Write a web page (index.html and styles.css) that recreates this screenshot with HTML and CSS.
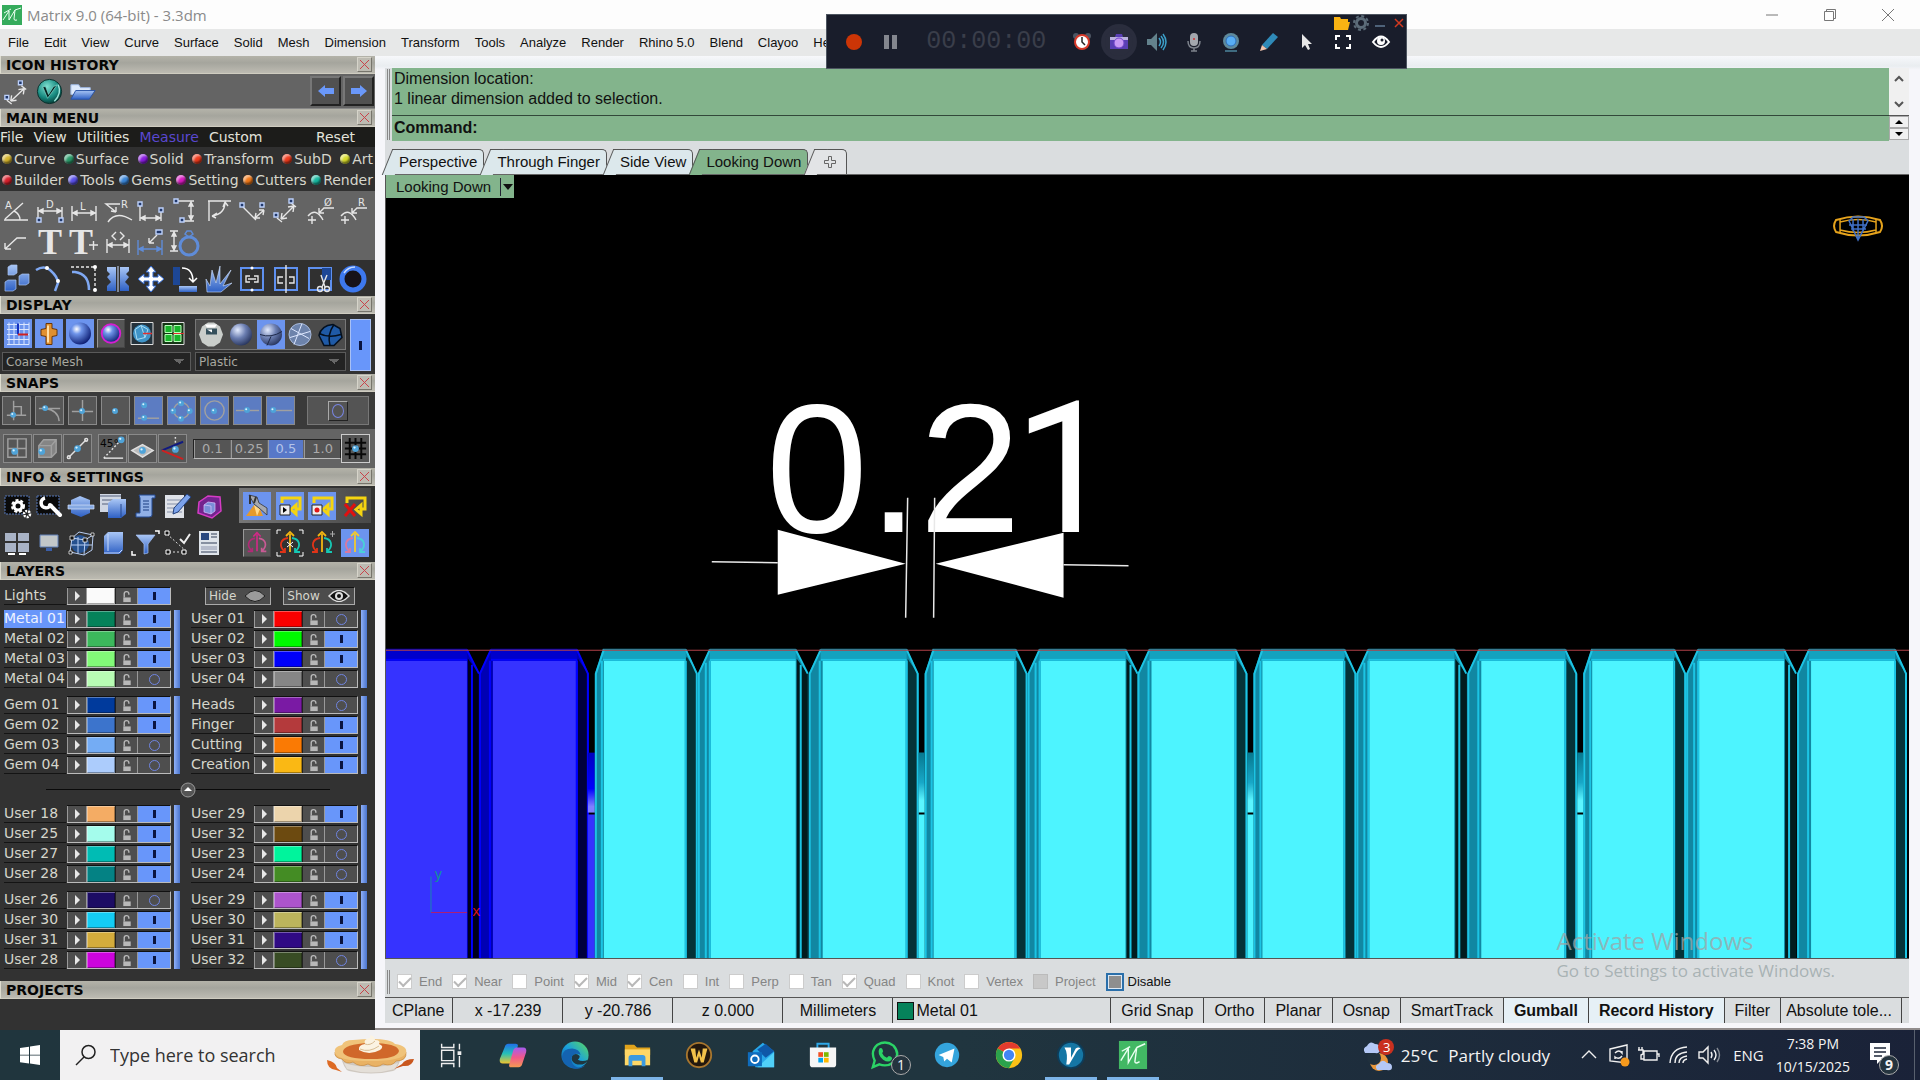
FILE: index.html
```html
<!DOCTYPE html>
<html lang="en">
	<head>
		<title>Matrix 9.0 (64-bit) - 3.3dm</title>
		<meta charset="UTF-8">
		<link rel="stylesheet" href="styles.css">
	</head>
	<body>
		<!-- shared symbols -->
		<svg class="defs" width="0" height="0">
			<defs>
				<radialGradient id="gBlue" cx="35%" cy="30%" r="75%"><stop offset="0" stop-color="#fff"/><stop offset=".3" stop-color="#6f95ea"/><stop offset="1" stop-color="#0a1a70"/></radialGradient>
				<radialGradient id="gSteel" cx="35%" cy="30%" r="75%"><stop offset="0" stop-color="#e4ecff"/><stop offset=".5" stop-color="#6a7db0"/><stop offset="1" stop-color="#27345c"/></radialGradient>
				<radialGradient id="gTeal" cx="40%" cy="30%" r="75%"><stop offset="0" stop-color="#7fe0d0"/><stop offset=".6" stop-color="#178a80"/><stop offset="1" stop-color="#04342f"/></radialGradient>
				<linearGradient id="gBox" x1="0" y1="0" x2="0" y2="1"><stop offset="0" stop-color="#a9c6f5"/><stop offset="1" stop-color="#2e60c4"/></linearGradient>
				<linearGradient id="gEdge" x1="0" y1="1" x2="1" y2="0"><stop offset="0" stop-color="#0c59a4"/><stop offset=".5" stop-color="#1aa0dc"/><stop offset="1" stop-color="#5fdc5a"/></linearGradient>
				<linearGradient id="gCopA" x1="0" y1="0" x2="0" y2="1"><stop offset="0" stop-color="#1f6fe8"/><stop offset=".5" stop-color="#25c0b8"/><stop offset="1" stop-color="#f0c52e"/></linearGradient>
				<linearGradient id="gCopB" x1="0" y1="0" x2="0" y2="1"><stop offset="0" stop-color="#a45cf0"/><stop offset=".5" stop-color="#f0588c"/><stop offset="1" stop-color="#f59a52"/></linearGradient>
				<linearGradient id="gGap" x1="0" y1="0" x2="0" y2="1"><stop offset="0" stop-color="#06788f"/><stop offset=".5" stop-color="#18a8c8"/><stop offset=".8" stop-color="#5cf5ff"/></linearGradient>
				<linearGradient id="gGapBlue" x1="0" y1="0" x2="0" y2="1"><stop offset="0" stop-color="#0000c0"/><stop offset=".6" stop-color="#0000ff"/><stop offset=".9" stop-color="#8080ff"/></linearGradient>
				<symbol id="pt" viewBox="0 0 8 8"><circle cx="4" cy="4" r="3.500" fill="#4fa3d8"/><circle cx="3" cy="3" r="1.200" fill="#d8f2ff"/></symbol>
				<symbol id="lock" viewBox="0 0 12 14"><path d="M3 8V4.500a2.500 2.500 0 0 1 5-.5V5" fill="none" stroke="#b8b8b8" stroke-width="1.500"/><path d="M2 8h8v5H2z" fill="#b8b8b8"/></symbol>
				<symbol id="orbit" viewBox="0 0 28 28"><g fill="none" stroke-width="1.800"><path d="M14 5v18M10 7l4-4 4 4" stroke="var(--up)"/><path d="M12 9C4 10 3 17 8 22M4 23h5v-4" stroke="var(--lt)"/><path d="M16 9c8 1 9 8 4 13M24 23h-5v-4" stroke="var(--rt)"/></g></symbol>
			</defs>
		</svg>

		<header class="titlebar">
			<svg class="app-logo" viewBox="0 0 20 20"><path fill="#35ab5c" d="M0 0h20v20H0z"/><path d="M1 15 7 6l0 9 6-10-1 9q0 2 3 1M2 8 9 4M13 5l6-2" fill="none" stroke="#e9fff0" stroke-width="1"/></svg>
			<h1>Matrix 9.0 (64-bit) - 3.3dm</h1>
			<div class="window-buttons">
				<button title="Minimize"><svg viewBox="0 0 12 12"><path d="M0 6h12"/></svg></button>
				<button title="Restore"><svg viewBox="0 0 12 12"><path d="M.5 2.500h9v9h-9zM2.500 2.500v-2h9v9h-2"/></svg></button>
				<button title="Close"><svg viewBox="0 0 12 12"><path d="M0 0l12 12M12 0 0 12"/></svg></button>
			</div>
		</header>

		<nav class="menubar">
			<a href="#">File</a><a href="#">Edit</a><a href="#">View</a><a href="#">Curve</a><a href="#">Surface</a><a href="#">Solid</a><a href="#">Mesh</a><a href="#">Dimension</a><a href="#">Transform</a><a href="#">Tools</a><a href="#">Analyze</a><a href="#">Render</a><a href="#">Rhino 5.0</a><a href="#">Blend</a><a href="#">Clayoo</a><a href="#">Help</a>
		</nav>

		<div class="workspace">
			<aside class="sidebar">
				<section>
					<div class="panel-head"><h2>ICON HISTORY</h2><button class="panel-close" title="Close"></button></div>
					<div class="history">
						<button class="tool"><svg viewBox="0 0 32 32" class="line"><path d="M6 25l5 4M21 10l5 4M10 26 24 13M10 26l1-6M10 26l6-1M24 13l-6 1M24 13l-1 6"/><path class="node" d="M4 20h4v4H4zM18 5h4v4h-4z"/></svg></button>
						<button class="tool"><svg viewBox="0 0 32 32"><circle cx="16" cy="16" r="12.500" fill="url(#gTeal)" stroke="#0a2f2b"/><path d="M9 11l5 12 10-14-4 2-5 8-3-8z" fill="#04201d" stroke="#7fd8cc" stroke-width=".7"/><path d="M25 9q4 9-4 17" fill="none" stroke="#9be6da" stroke-width="1.500"/></svg></button>
						<button class="tool"><svg viewBox="0 0 32 32"><path d="M4 9h8l2 3h10v7H4z" fill="#dde9fb" stroke="#9db8e4"/><path d="M4 24 9 15h20l-6 9z" fill="url(#gBox)" stroke="#2a55a8"/></svg></button>
						<button class="arrow-btn push" title="Back"><svg viewBox="0 0 20 20"><path d="M2 10l7-6v3h9v6H9v3z"/></svg></button>
						<button class="arrow-btn" title="Forward"><svg viewBox="0 0 20 20"><path d="M18 10l-7-6v3H2v6h9v3z"/></svg></button>
					</div>
				</section>

				<section>
					<div class="panel-head"><h2>MAIN MENU</h2><button class="panel-close" title="Close"></button></div>
					<nav class="main-menu">
						<a href="#">File</a><a href="#">View</a><a href="#">Utilities</a><a href="#" class="current">Measure</a><a href="#">Custom</a><a href="#" class="push">Reset</a>
					</nav>
					<nav class="categories" id="categories"></nav>
					<div class="tool-grid measure-tools">
						<button class="tool"><svg viewBox="0 0 32 32" class="line"><path d="M3 26h24M4 25 22 9M13 17q6 3 6 9"/><text x="4" y="15">A</text></svg></button>
						<button class="tool"><svg viewBox="0 0 32 32" class="line"><path d="M4 13v12M28 13v12M5 17h22M5 17l4-2v4zM27 17l-4-2v4z"/><path class="node" d="M3 24h4v4H3zM25 24h4v4h-4z"/><text x="12" y="14">D</text></svg></button>
						<button class="tool"><svg viewBox="0 0 32 32" class="line"><path d="M4 12v15M28 12v15M5 19h22M5 19l4-2v4zM27 19l-4-2v4z"/><text x="12" y="16">L</text></svg></button>
						<button class="tool"><svg viewBox="0 0 32 32" class="line"><path d="M18 10H4l10 8M14 18l-5-1M6 28q8-12 24-2M14 18v-5"/><text x="19" y="14">R</text></svg></button>
						<button class="tool"><svg viewBox="0 0 32 32" class="line"><path d="M5 12v15M26 18v9M6 24h19M6 24l4-2v4zM25 24l-4-2v4z"/><path class="node" d="M3 8h4v4H3zM24 14h4v4h-4z"/></svg></button>
						<button class="tool"><svg viewBox="0 0 32 32" class="line"><path d="M8 7h17M14 27h11M22 8v18M22 8l-2 4h4zM22 26l-2-4h4z"/><path class="node" d="M5 5h4v4H5zM11 24h4v4h-4z"/></svg></button>
						<button class="tool"><svg viewBox="0 0 32 32" class="line"><path d="M5 7h23M6 7v20M9 22Q22 20 22 8M9 22l5-3M9 22l4 2M22 8l-2 5M22 8l3 4"/></svg></button>
						<button class="tool"><svg viewBox="0 0 32 32" class="line"><path d="M7 13 20 26M19 24l9-8M19 24l1-5M19 24l5 0M28 16l-5 0M28 16l-1 5"/><path class="node" d="M4 9h4v4H4zM24 9h4v4h-4z"/></svg></button>
						<button class="tool"><svg viewBox="0 0 32 32" class="line"><path d="M7 24l5 4M21 9l5 4M11 25 24 12M11 25l1-6M11 25l6-1M24 12l-6 1M24 12l-1 6"/><path class="node" d="M4 19h4v4H4zM19 5h4v4h-4z"/></svg></button>
						<button class="tool"><svg viewBox="0 0 32 32" class="line"><path d="M4 22q8-9 15 4M30 14H20l-5 5M15 19v-5M15 19h5M8 22v8M4 26h8"/><text x="20" y="12">Ø</text></svg></button>
						<button class="tool"><svg viewBox="0 0 32 32" class="line"><path d="M4 22q8-9 15 4M30 14H20l-5 5M15 19v-5M15 19h5M8 22v8M4 26h8"/><text x="21" y="12">R</text></svg></button>
						<button class="tool"><svg viewBox="0 0 32 32" class="line"><path d="M25 11h-9L4 22M4 22v-6M4 22h6"/></svg></button>
						<button class="tool"><svg viewBox="0 0 32 32" class="line"><text class="big-t" x="4" y="27">T</text></svg></button>
						<button class="tool"><svg viewBox="0 0 32 32" class="line"><text class="big-t" x="1" y="27">T</text><path d="M21 18h9M25.500 14v9"/></svg></button>
						<button class="tool"><svg viewBox="0 0 32 32" class="line"><path d="M5 12v14M27 12v14M6 18h20M6 18l4-2v4zM26 18l-4-2v4zM14 5l-4 4 4 4M18 5l4 4-4 4"/></svg></button>
						<button class="tool"><svg viewBox="0 0 32 32" class="line"><path class="blue-line" d="M3 13v15M27 13v15M4 22h22M4 22l4-2v4zM26 22l-4-2v4z"/><path d="M22 8l-8 8M14 16v-5M14 16h5"/><path class="node" d="M21 3h6v4h-6z"/></svg></button>
						<button class="tool"><svg viewBox="0 0 32 32" class="line"><path d="M1 4h8M1 24h8M5 5v18M5 5 3 9h4zM5 23l-2-4h4z"/><circle class="blue-line ring" cx="20" cy="19" r="9"/><path class="blue-line" d="M16 7l2-3h4l2 3-4 3z"/></svg></button>
					</div>
					<div class="tool-grid edit-tools">
						<button class="tool"><svg viewBox="0 0 32 32"><path d="M7 4l3-2h6v8l-3 2H7zM18 13l3-2h7v9l-3 2h-7zM4 19l3-2h8v9l-3 2H4z" fill="url(#gBox)" stroke="#a9c3ef" stroke-width=".7"/></svg></button>
						<button class="tool"><svg viewBox="0 0 32 32" class="line"><path class="thick" d="M2 7q8-5 14 0 8 7 8 13l-3 8"/><circle class="dot" cx="13" cy="5" r="2"/><circle class="dot" cx="24" cy="18" r="2"/></svg></button>
						<button class="tool"><svg viewBox="0 0 32 32" class="line"><path stroke-dasharray="3 2" d="M3 4h24v24"/><path class="thick" d="M4 9h3q14 2 14 18"/><circle class="dot" cx="27" cy="4" r="2"/><circle class="dot" cx="27" cy="27" r="2"/></svg></button>
						<button class="tool"><svg viewBox="0 0 32 32"><path d="M14 4v24H5v-5l4-4-4-5 3-3-3-3V4zM18 4v24h9v-5l-4-4 4-5-3-3 3-3V4z" fill="url(#gBox)"/><path d="M16 3v26" stroke="#cfe0ff"/></svg></button>
						<button class="tool"><svg viewBox="0 0 32 32"><path d="M16 3l5 6h-3v5h5v-3l6 5-6 5v-3h-5v5h3l-5 6-5-6h3v-5H9v3l-6-5 6-5v3h5V9h-3z" fill="#fff" stroke="#2f66cc"/></svg></button>
						<button class="tool"><svg viewBox="0 0 32 32"><path d="M4 4h7v18H4z" fill="#1d4796"/><path d="M10 23h18v6H10z" fill="url(#gBox)"/><path d="M13 5q11 0 11 14M20 15l4 4 4-4" fill="none" stroke="#fff" stroke-width="1.500"/></svg></button>
						<button class="tool"><svg viewBox="0 0 32 32"><path d="M4 29 3 16l4 7L9 7l4 13 4-17 0 18L28 7l-8 16 9-3-11 9z" fill="url(#gBox)" stroke="#cfe0ff" stroke-width=".6"/></svg></button>
						<button class="tool"><svg viewBox="0 0 32 32" class="line"><path class="frame" d="M5 5h22v22H5z"/><path d="M14 13h-4v6h4M18 13h4v6h-4M12 16h8"/><circle class="dot" cx="16" cy="5" r="1.500"/><circle class="dot" cx="16" cy="27" r="1.500"/></svg></button>
						<button class="tool"><svg viewBox="0 0 32 32" class="line"><path class="frame" d="M5 5h22v22H5z"/><path d="M13 14H8v6h5M19 14h5v6h-5M16 2v28"/></svg></button>
						<button class="tool"><svg viewBox="0 0 32 32" class="line"><path class="frame" d="M5 5h22v22H5z"/><path d="M18 5h9v12h-9z" fill="#1d4796" stroke="none"/><path d="M17 12l4 12M23 12l-5 12"/><circle cx="16" cy="26" r="2.500"/><circle cx="23" cy="26" r="2.500"/></svg></button>
						<button class="tool"><svg viewBox="0 0 32 32"><circle cx="16" cy="16" r="11" fill="#171219" stroke="#3d78ee" stroke-width="5"/><path d="M7 10q4-6 11-6" stroke="#c5dbff" stroke-width="1.500" fill="none"/></svg></button>
					</div>
				</section>

				<section>
					<div class="panel-head"><h2>DISPLAY</h2><button class="panel-close" title="Close"></button></div>
					<div class="display">
						<div class="display-left">
							<div class="display-icons">
								<button class="tool on"><svg viewBox="0 0 28 28"><path d="M5 3v22M10 3v22M15 3v22M20 3v22M25 3v22M3 5h22M3 10h22M3 15h22M3 20h22M3 25h22" stroke="#dbe6ff" fill="none"/><path d="M14 4v11" stroke="#1530c0" stroke-width="2"/><path d="M14 15h10" stroke="#d02020" stroke-width="2"/></svg></button>
								<button class="tool on"><svg viewBox="0 0 28 28"><path d="M11 4h6v5l5 1v6l-5 1v8h-6v-8l-5-1v-6l5-1z" fill="#e09030" stroke="#6a3606"/><path d="M13 6v17" stroke="#ffe0a8" stroke-width="2"/></svg></button>
								<button class="tool on"><svg viewBox="0 0 28 28"><circle cx="14" cy="14" r="11" fill="url(#gBlue)"/></svg></button>
								<button class="tool raised"><svg viewBox="0 0 28 28"><circle cx="14" cy="14" r="10" fill="url(#gBlue)" stroke="#d51fd0" stroke-width="2"/></svg></button>
								<button class="tool"><svg viewBox="0 0 28 28"><path d="M3 3h22v22H3z" fill="#24323c" stroke="#ddd"/><circle cx="14" cy="14" r="9" fill="#3f94c8"/><path d="M7 10l6-4 7 4-3 8-8 2zM13 6l4 12" fill="none" stroke="#a9dcf4"/><path d="M15 14h9" stroke="#e03030" stroke-width="1.500"/></svg></button>
								<button class="tool"><svg viewBox="0 0 28 28"><path d="M3 3h22v22H3z" fill="#143614" stroke="#ddd"/><path d="M6 6h7v7H6zM15 6h7v7h-7zM6 15h7v7H6zM15 15h7v7h-7z" fill="#19b52b" stroke="#b9ffb9"/><path d="M14 14h11" stroke="#e03030"/></svg></button>
							</div>
							<select aria-label="Mesh quality"><option>Coarse Mesh</option></select>
						</div>
						<div class="display-right">
							<div class="display-icons boxed">
								<button class="tool"><svg viewBox="0 0 28 28"><path d="M2 14 5 6l6-4h6l6 4 3 8-3 8-6 4h-6l-6-4z" fill="#c9cdca"/><path d="M8 4h12l-2 3h-8z" fill="#fff"/><path d="M9 8h11v6H9z" fill="#35505c"/><path d="M10 9h5v3z" fill="#fff"/></svg></button>
								<button class="tool"><svg viewBox="0 0 28 28"><circle cx="14" cy="14" r="11" fill="url(#gSteel)"/></svg></button>
								<button class="tool on"><svg viewBox="0 0 28 28"><circle cx="14" cy="14" r="11" fill="url(#gSteel)"/><path d="M3 14q11 4 22-3M10 25l4-9" fill="none" stroke="#1c2848"/></svg></button>
								<button class="tool"><svg viewBox="0 0 28 28"><circle cx="14" cy="14" r="11" fill="#6d83ab" stroke="#a9bbdd"/><path d="M5 8l18 10M8 24l8-21M4 17l20-6" stroke="#dde7ff" fill="none"/></svg></button>
								<button class="tool"><svg viewBox="0 0 28 28"><path d="M3 15q2-10 14-11l7 4 2 9-8 8H8z" fill="#1f5aa6" stroke="#04101f" stroke-width="1.500"/><path d="M3 13q10 5 22 1M18 4q-7 10-4 21" fill="none" stroke="#04101f" stroke-width="1.500"/></svg></button>
							</div>
							<select aria-label="Material"><option>Plastic</option></select>
						</div>
						<button class="display-toggle" title="Toggle"></button>
					</div>
				</section>

				<section>
					<div class="panel-head"><h2>SNAPS</h2><button class="panel-close" title="Close"></button></div>
					<div class="snaps-modes">
						<button class="snap"><svg viewBox="0 0 28 28"><path d="M4 19h20M11 4v20M11 10h8v9"/><use href="#pt" x="7" y="15" width="7" height="7"/></svg></button>
						<button class="snap"><svg viewBox="0 0 28 28"><path d="M3 12h22M10 12q13 2 14 13"/><use href="#pt" x="6" y="8" width="7" height="7"/></svg></button>
						<button class="snap"><svg viewBox="0 0 28 28"><path d="M3 15h22M14 3v22"/><use href="#pt" x="10" y="11" width="7" height="7"/></svg></button>
						<button class="snap"><svg viewBox="0 0 28 28"><use href="#pt" x="10" y="11" width="7" height="7"/></svg></button>
						<button class="snap on"><svg viewBox="0 0 28 28"><path d="M3 22h22"/><use href="#pt" x="6" y="5" width="7" height="7"/><use href="#pt" x="6" y="18" width="7" height="7"/></svg></button>
						<button class="snap on"><svg viewBox="0 0 28 28"><circle cx="14" cy="14" r="8"/><use href="#pt" x="10" y="3" width="7" height="7"/><use href="#pt" x="2" y="11" width="7" height="7"/><use href="#pt" x="19" y="11" width="7" height="7"/><use href="#pt" x="10" y="19" width="7" height="7"/></svg></button>
						<button class="snap on"><svg viewBox="0 0 28 28"><circle cx="14" cy="14" r="10"/><use href="#pt" x="10" y="11" width="7" height="7"/></svg></button>
						<button class="snap on"><svg viewBox="0 0 28 28"><path d="M2 14h24"/><use href="#pt" x="10" y="10" width="7" height="7"/></svg></button>
						<button class="snap on"><svg viewBox="0 0 28 28"><path d="M6 14h20"/><use href="#pt" x="3" y="10" width="7" height="7"/></svg></button>
						<button class="snap-all push" title="All snaps"><span></span></button>
					</div>
					<div class="snaps-grid">
						<div class="join">
							<button class="snap"><svg viewBox="0 0 28 28"><path d="M4 4h19v19H4zM14 4v19M4 14h19"/><use href="#pt" x="7" y="13" width="8" height="8"/></svg></button>
							<button class="snap"><svg viewBox="0 0 28 28"><path d="M5 11l5-6h13v13l-5 5H5zM18 23V11M18 11l5-6M5 11h13" fill="#858585"/><use href="#pt" x="4" y="13" width="8" height="8"/></svg></button>
							<button class="snap"><svg viewBox="0 0 28 28"><path class="hi" d="M5 23 23 5"/><circle class="hi" cx="5" cy="23" r="1.500"/><circle class="hi" cx="23" cy="5" r="1.500"/><use href="#pt" x="10" y="10" width="8" height="8"/></svg></button>
						</div>
						<div class="join">
							<button class="snap"><svg viewBox="0 0 28 28"><path class="hi" d="M5 24h20"/><path class="hi" stroke-dasharray="2 2" d="M5 24 22 6"/><text x="1" y="12">45°</text><use href="#pt" x="19" y="1" width="8" height="8"/></svg></button>
							<button class="snap"><svg viewBox="0 0 28 28"><path class="hi" fill="#bbb" d="M3 16l11-6 11 6-11 7z"/><use href="#pt" x="10" y="12" width="8" height="8"/></svg></button>
							<button class="snap"><svg viewBox="0 0 28 28"><path class="hi" stroke-dasharray="2 2" d="M17 2v12"/><path class="navy" d="M3 16 25 7"/><path class="red" d="M3 16l22 9"/><use href="#pt" x="13" y="11" width="8" height="8"/></svg></button>
						</div>
						<div class="steps">
							<button>0.1</button><button>0.25</button><button class="on">0.5</button><button>1.0</button>
						</div>
						<button class="snap grid-btn"><svg viewBox="0 0 28 28"><path class="dark" d="M8 3v22M14 3v22M20 3v22M3 8h22M3 14h22M3 20h22"/><use href="#pt" x="10" y="10" width="8" height="8"/></svg></button>
					</div>
				</section>

				<section>
					<div class="panel-head"><h2>INFO &amp; SETTINGS</h2><button class="panel-close" title="Close"></button></div>
					<div class="info">
						<div class="info-row">
							<button class="tool"><svg viewBox="0 0 28 28"><path d="M2 4h24v18H2z" fill="#0a0a0a" stroke="#5577b8" stroke-dasharray="2 1"/><circle cx="15" cy="14" r="4" fill="none" stroke="#fff" stroke-width="3"/><circle cx="15" cy="14" r="6" fill="none" stroke="#fff" stroke-width="2" stroke-dasharray="3 2"/><circle cx="24" cy="22" r="3" fill="#222" stroke="#fff" stroke-width="2.500" stroke-dasharray="2 1"/></svg></button>
							<button class="tool"><svg viewBox="0 0 28 28"><path d="M2 4h22v18H2z" fill="#0a0a0a" stroke="#5577b8" stroke-dasharray="2 1"/><path d="M15 13l10 10" stroke="#fff" stroke-width="4" stroke-linecap="round"/><path d="M10 6a5 5 0 1 0 6 6" fill="none" stroke="#fff" stroke-width="3.500"/></svg></button>
							<button class="tool"><svg viewBox="0 0 28 28"><path d="M4 8l9-4 10 4v13l-9 4-10-4z" fill="url(#gBox)"/><path d="M1 13h26v4H1z" fill="#86a9e2" stroke="#d7e4fb" stroke-width=".7"/></svg></button>
							<button class="tool"><svg viewBox="0 0 28 28"><path d="M1 2h21v18H1z" fill="#cfd6e2"/><path d="M1 4h21M3 8h17M3 12h17" stroke="#54617c"/><path d="M9 11l5-4h13v15l-5 4H9z" fill="url(#gBox)"/><path d="M22 12v13" stroke="#24468c"/></svg></button>
							<button class="tool"><svg viewBox="0 0 28 28"><path d="M8 3h16v3h-3v17q0 2-3 2H5v-4h4V6z" fill="#91b0e6" stroke="#234a94"/><path d="M12 9h6M12 12h6M12 15h6M12 18h6" stroke="#1b3c80"/></svg></button>
							<button class="tool"><svg viewBox="0 0 28 28"><path d="M2 3h19v23H2z" fill="#dfe2e8"/><path d="M4 8h15M4 12h15M4 16h15M4 20h15" stroke="#8590a8"/><path d="M24 2l4 3-13 15-5 2 1-6z" fill="#7ba2ea" stroke="#22407c"/></svg></button>
							<button class="tool"><svg viewBox="0 0 28 28"><path d="M4 10l9-6 12 1 1 14-9 7-14-5z" fill="#73248e" stroke="#d53cc5" stroke-width="1.500"/><path d="M9 13l4-3 7 1v8l-4 3-7-2zM9 13l7 1v8" fill="#7a8ed8" stroke="#d9c4ff" stroke-width=".7"/></svg></button>
							<div class="info-right light">
								<button class="tool on"><svg viewBox="0 0 28 28"><path d="M3 24 11 13l6 4 3 7z" fill="#e59a2c"/><path d="M11 13l6 4-3 7z" fill="#ffd98a"/><path d="M6 3l8 2 2 6 8 5v7l-8-7-5-4z" fill="#a6a9ae" stroke="#333" stroke-width=".8"/><path d="M7 3v9M13 5l-2 6" stroke="#333" stroke-width="2"/></svg></button>
								<button class="tool on"><svg viewBox="0 0 28 28"><path d="M6 11V6h18v11h-4M20 13v9l-5-4.500z" fill="none" stroke="#f5d410" stroke-width="3"/><path d="M4 13h10v10H4z" fill="#eee" stroke="#222"/><path d="M7 15v6l4-3z"/></svg></button>
								<button class="tool on"><svg viewBox="0 0 28 28"><path d="M6 11V6h18v11h-4M20 13v9l-5-4.500z" fill="none" stroke="#f5d410" stroke-width="3"/><path d="M4 13h10v10H4z" fill="#eee" stroke="#222"/><circle cx="9" cy="18" r="2.500" fill="#e01818"/></svg></button>
								<button class="tool"><svg viewBox="0 0 28 28"><path d="M6 11V6h18v11h-4M20 13v9l-5-4.500z" fill="none" stroke="#f5d410" stroke-width="3"/><path d="M4 12l10 12M14 12 4 24" stroke="#e01010" stroke-width="3"/></svg></button>
							</div>
						</div>
						<div class="info-row">
							<button class="tool"><svg viewBox="0 0 28 28"><path d="M2 4h11v8H2zM15 4h11v8H15zM2 14h11v9H2zM15 14h11v9H15z" fill="#a9b3c6"/><path d="M5 25h7M16 25h7" stroke="#fff" stroke-width="2"/></svg></button>
							<button class="tool"><svg viewBox="0 0 28 28"><path d="M5 6h18v12H5z" fill="#c2c7c9" stroke="#6180b8"/><path d="M11 19h6v3h-6z" fill="#3b5ea8"/></svg></button>
							<button class="tool"><svg viewBox="0 0 28 28"><circle cx="13" cy="15" r="9" fill="#25508e"/><path d="M5 9l7-6 14 3-1 15-8 5L3 23zM5 9l13 2 8-5M18 11l-1 15M4 16h21M11 8v17" fill="none" stroke="#b7cdf2"/><path d="M3 7h4v4H3zM16 9h4v4h-4zM24 4h3v3h-3zM2 22h3v3H2z" fill="#111" stroke="#fff" stroke-width=".7"/></svg></button>
							<button class="tool"><svg viewBox="0 0 28 28"><path d="M5 7l4-4h15v18l-3 4H5z" fill="url(#gBox)"/><path d="M9 5v17M5 24h15l3-3" stroke="#c8dafc" fill="none"/></svg></button>
							<button class="tool"><svg viewBox="0 0 28 28"><path d="M5 6h19l-7 9v9l-4 1V15z" fill="url(#gBox)" stroke="#a6c2f2" stroke-width=".7"/><path d="M24 2h4v3M1 22v4h4" stroke="#fff" fill="none" stroke-width="1.500"/></svg></button>
							<button class="tool"><svg viewBox="0 0 28 28"><path d="M4 5l20 18M6 23h17" stroke="#ddd" stroke-dasharray="2 2"/><path d="M2 2h4v4H2zM3 21h4v4H3zM19 21h4v4h-4z" fill="#111" stroke="#fff"/><path d="M17 10l4 4 6-9" fill="none" stroke="#eee" stroke-width="2"/></svg></button>
							<button class="tool"><svg viewBox="0 0 28 28"><path d="M4 2h20v24H4z" fill="#dfe4ea"/><path d="M6 4h8v7H6z" fill="#27477f"/><path d="M16 5h6M16 8h6M6 14h16M6 23h16" stroke="#6b7488" stroke-width="1.500"/><path d="M6 17h16v4H6z" fill="#b6bccb"/></svg></button>
							<div class="info-right">
								<button class="tool raised"><svg class="pink" viewBox="0 0 28 28"><use href="#orbit"/></svg></button>
								<button class="tool"><svg class="multi" viewBox="0 0 28 28"><use href="#orbit"/><path d="M1 5V1h4M23 1h4v4M1 23v4h4M27 23v4h-4M11 13l6 5M17 13l-6 5" stroke="#fff" fill="none"/></svg></button>
								<button class="tool"><svg class="multi" viewBox="0 0 28 28"><use href="#orbit"/><path d="M22 5h5M24.500 2v6" stroke="#aaa"/></svg></button>
								<button class="tool on"><svg class="soft" viewBox="0 0 28 28"><use href="#orbit"/></svg></button>
							</div>
						</div>
					</div>
				</section>

				<section>
					<div class="panel-head"><h2>LAYERS</h2><button class="panel-close" title="Close"></button></div>
					<div class="layers">
						<div class="layers-top">
							<div id="lights"></div>
							<div class="visibility">
								<button>Hide <svg viewBox="0 0 22 12"><path d="M1 6q10-11 20 0-10 11-20 0z" fill="#9a9a9a" stroke="#222"/></svg></button>
								<button>Show <svg viewBox="0 0 22 12"><path d="M1 6q10-11 20 0-10 11-20 0z" fill="#111" stroke="#ddd" stroke-width="1.500"/><circle cx="11" cy="6" r="4" fill="#ddd"/><circle cx="11" cy="6" r="2" fill="#111"/></svg></button>
							</div>
						</div>
						<div class="layer-cols" id="layersTop"></div>
						<div class="layers-split"><button title="Collapse"><svg viewBox="0 0 16 16"><circle cx="8" cy="8" r="7" fill="#555" stroke="#999"/><path d="M4 9l4-4 4 4z" fill="#fff"/></svg></button></div>
						<div class="layer-cols" id="layersBottom"></div>
					</div>
				</section>

				<section class="projects">
					<div class="panel-head"><h2>PROJECTS</h2><button class="panel-close" title="Close"></button></div>
				</section>
			</aside>

			<main class="main">
				<div class="command">
					<div class="grip"></div>
					<div class="command-text">
						<div class="command-history">
							<p>Dimension location:</p>
							<p>1 linear dimension added to selection.</p>
						</div>
						<div class="command-line"><label for="cmd">Command:</label><input id="cmd" type="text" autocomplete="off"></div>
					</div>
					<div class="command-scroll">
						<div class="scroll-box"><button title="Up"><svg viewBox="0 0 10 8"><path d="M1 6l4-4 4 4"/></svg></button><button title="Down"><svg viewBox="0 0 10 8"><path d="M1 2l4 4 4-4"/></svg></button></div>
						<div class="spin-box"><button title="Previous"><svg viewBox="0 0 8 4"><path d="M0 4l4-4 4 4z"/></svg></button><button title="Next"><svg viewBox="0 0 8 4"><path d="M0 0l4 4 4-4z"/></svg></button></div>
					</div>
				</div>

				<div class="tabs">
					<button class="tab">Perspective</button>
					<button class="tab">Through Finger</button>
					<button class="tab">Side View</button>
					<button class="tab active">Looking Down</button>
					<button class="tab add" title="New viewport"><svg viewBox="0 0 12 12"><path d="M4.500.5h3v4h4v3h-4v4h-3v-4h-4v-3h4z"/></svg></button>
				</div>

				<div class="viewport">
					<svg class="scene" viewBox="0 0 1524 784" preserveAspectRatio="xMinYMin slice">
						<defs>
							<!-- first stone after a gap -->
							<g id="stoneA">
								<path class="side" d="M0 25 8 0H91L103 25V310H0z"/>
								<path class="shade soft" d="M90 12 92 8 103 25V310H92z"/>
								<path class="table" d="M9 12H90V310H9z"/>
								<path class="lip" d="M8 1H91V10H8z"/>
								<path class="edge" d="M1 310V25L9 1M91 1 102 25V310M7 12V310M91 12V310M8 11H91"/>
							</g>
							<!-- middle stone -->
							<g id="stoneB">
								<path class="side" d="M0 25 12 0H98L110 25V310H0z"/>
								<path class="shade" d="M99 10 110 25V310H99z"/>
								<path class="table" d="M13 12H98V310H13z"/>
								<path class="lip" d="M12 1H98V10H12z"/>
								<path class="edge" d="M1 310V25L12 1M98 1 110 25M8 14V310M12 12V310M103 16V310M12 11H98"/>
							</g>
							<!-- last stone before a gap -->
							<g id="stoneC">
								<path class="side" d="M0 25 12 0H98L110 25V310H0z"/>
								<path class="shade soft" d="M99 10 109 25V310H99z"/>
								<path class="table" d="M14 12H97V310H14z"/>
								<path class="lip" d="M12 1H98V10H12z"/>
								<path class="edge" d="M1 310V25L12 1M98 1 109 25V310M11 12V310M98 12V310M12 11H98"/>
							</g>
						</defs>

						<g class="stones blue">
							<use href="#stoneB" x="-17" y="474"/>
							<use href="#stoneC" x="93" y="474"/>
							<path d="M202 578h7v60h-7z" fill="url(#gGapBlue)"/>
							<path class="table" d="M202 640h7v144h-7z"/>
						</g>
						<g class="stones">
							<use href="#stoneA" x="209" y="474"/>
							<use href="#stoneB" x="312" y="474"/>
							<use href="#stoneC" x="423" y="474"/>
							<use href="#stoneA" x="539" y="474"/>
							<use href="#stoneB" x="642" y="474"/>
							<use href="#stoneC" x="752" y="474"/>
							<use href="#stoneA" x="868" y="474"/>
							<use href="#stoneB" x="971" y="474"/>
							<use href="#stoneC" x="1082" y="474"/>
							<use href="#stoneA" x="1198" y="474"/>
							<use href="#stoneB" x="1301" y="474"/>
							<use href="#stoneC" x="1412" y="474"/>
							<path d="M533 578h6v60h-6zM862 578h6v60h-6zM1192 578h6v60h-6z" fill="url(#gGap)"/>
							<path class="table" d="M533 640h6v144h-6zM862 640h6v144h-6zM1192 640h6v144h-6z"/>
						</g>
						<path d="M0 475H1524V476H0z" fill="#b04048"/>

						<!-- linear dimension -->
						<g class="dimension">
							<text y="357"><tspan x="380">0.2</tspan><tspan class="one" x="628">1</tspan></text>
							<path d="M392 355V420L520 389zM678 358V423L550 389z"/>
							<path class="dim-line" d="M326 387 392 388M678 390 743 391M522 323 520 443M549 323 548 443"/>
						</g>

						<path d="M45 702V738" stroke="#1c86b0"/><path d="M45 738H81" stroke="#b02070"/>
						<text class="axis y" x="48" y="704">y</text>
						<text class="axis x" x="86" y="741">x</text>

						<g fill="none" stroke="#e6a31c" stroke-width="2">
							<path d="M1451 45q22-7 44 0 4 6 0 12-22 7-44 0-4-6 0-12z"/>
							<path d="M1455 47q18-5 36 0v8q-18 5-36 0zM1455 44v14M1491 44v14" stroke-width="1.500"/>
							<path d="M1464 46l4-4h11l4 4-10 19zM1464 50h18M1468 44v12M1478 44v12M1473 44v20M1466 54h15" stroke="#3f6fc4" stroke-width="1.500"/>
						</g>
					</svg>
					<div class="view-label"><span>Looking Down</span><button title="Viewport menu"></button></div>
				</div>

				<div class="osnaps" id="osnaps"></div>

				<div class="status">
					<button>CPlane</button>
					<button class="coord">x -17.239</button>
					<button class="coord">y -20.786</button>
					<button class="coord">z 0.000</button>
					<button class="coord">Millimeters</button>
					<button class="layer"><i></i>Metal 01</button>
					<button>Grid Snap</button>
					<button>Ortho</button>
					<button>Planar</button>
					<button>Osnap</button>
					<button>SmartTrack</button>
					<button class="on">Gumball</button>
					<button class="on">Record History</button>
					<button>Filter</button>
					<button class="tol">Absolute tole...</button>
				</div>
				<div class="watermark">
					<p class="wm-title">Activate Windows</p>
					<p>Go to Settings to activate Windows.</p>
				</div>
			</main>
		</div>

		<!-- screen recorder, floats over the window -->
		<div class="recorder">
			<button title="Record"><svg viewBox="0 0 28 28"><circle cx="14" cy="14" r="8" fill="#cc3506"/></svg></button>
			<button title="Pause"><svg viewBox="0 0 28 28"><path d="M7 7h5v14H7zM15 7h5v14h-5z" fill="#83868e"/></svg></button>
			<span class="timer">00:00:00</span>
			<button title="Schedule"><svg viewBox="0 0 28 28"><circle cx="8" cy="8" r="3" fill="#4d5563"/><circle cx="20" cy="8" r="3" fill="#4d5563"/><circle cx="14" cy="14" r="7" fill="#fff" stroke="#d83a2a" stroke-width="2"/><path d="M14 9v5l3 3" stroke="#222" fill="none" stroke-width="1.500"/></svg></button>
			<button class="round" title="Screenshot"><svg viewBox="0 0 28 28"><path d="M5 9h5l1-3h6l1 3h5v12H5z" fill="#5a3fb4"/><path d="M5 9h18v3H5z" fill="#b9b0dd"/><circle cx="14" cy="15" r="5" fill="#c99af5" stroke="#7246cc"/></svg></button>
			<button title="Speaker"><svg viewBox="0 0 28 28"><path d="M5 11h4l6-6v18l-6-6H5z" fill="#63828c"/><path d="M17 10q3 4 0 8M19 8q5 6 0 12M21 6q6 8 0 16" fill="none" stroke="#3c9fc8" stroke-width="1.500"/></svg></button>
			<button title="Microphone"><svg viewBox="0 0 28 28"><rect x="10" y="5" width="8" height="13" rx="4" fill="#a3a7ae"/><path d="M8 13q0 7 6 7t6-7M14 20v3M11 23h6" fill="none" stroke="#7d828c" stroke-width="1.500"/><circle cx="14" cy="11" r="1" fill="#d03030"/></svg></button>
			<button title="Webcam"><svg viewBox="0 0 28 28"><path d="M8 22h12v2H8z" fill="#3f6b80"/><circle cx="14" cy="13" r="8" fill="#5f8a9c"/><circle cx="14" cy="13" r="5" fill="#58aef5" stroke="#2d6dbb"/></svg></button>
			<button title="Draw"><svg viewBox="0 0 28 28"><path d="M18 5l5 4-11 12-5-4z" fill="#2f8ab8"/><path d="M7 17l5 4-7 2z" fill="#f1c4ae"/></svg></button>
			<button title="Cursor"><svg viewBox="0 0 28 28"><path d="M10 6v14l3-3 3 5 2-1-2-5h4z" fill="#e7e7e7"/></svg></button>
			<button title="Region"><svg viewBox="0 0 28 28"><path d="M7 12V8h4M17 8h4v4M21 16v4h-4M11 20H7v-4" fill="none" stroke="#fff" stroke-width="2"/></svg></button>
			<button title="Preview"><svg viewBox="0 0 28 28"><path d="M6 14q8-11 16 0-8 10-16 0z" fill="#1a1e2c" stroke="#fff" stroke-width="2"/><circle cx="14" cy="13" r="4" fill="#fff"/><circle cx="15" cy="12" r="1.500" fill="#1a1e2c"/></svg></button>
			<div class="recorder-corner">
				<button title="Open folder"><svg viewBox="0 0 16 16"><path d="M0 2h6l1 2h7v3h2l-2 8H0z" fill="#f9b313"/></svg></button>
				<button title="Settings"><svg viewBox="0 0 16 16"><circle cx="8" cy="8" r="4.500" fill="none" stroke="#5b6b78" stroke-width="3"/><circle cx="8" cy="8" r="7" fill="none" stroke="#5b6b78" stroke-width="2" stroke-dasharray="3 2.500"/></svg></button>
				<button title="Minimize"><svg viewBox="0 0 16 16"><path d="M3 11h10" stroke="#607a94" stroke-width="1.500"/></svg></button>
				<button title="Close"><svg viewBox="0 0 16 16"><path d="M4 4l8 8M12 4l-8 8" stroke="#d33a20" stroke-width="1.500"/></svg></button>
			</div>
		</div>

		<footer class="taskbar">
			<button class="start" title="Start"><svg viewBox="0 0 20 20"><path d="M0 3l9-1.300v8H0zM10 1.500 20 0v9.700H10zM0 10.500h9v8L0 17.200zM10 10.500h10V20l-10-1.500z" fill="#fff"/></svg></button>
			<div class="search">
				<svg class="glass" viewBox="0 0 22 22"><circle cx="13.500" cy="8" r="6.500"/><path d="M9 13l-8 8"/></svg>
				<input type="text" placeholder="Type here to search" aria-label="Type here to search">
				<svg class="pie" viewBox="0 0 90 40"><path d="M14 19q4 16 9 17 22 5 44 0 5-1 9-17z" fill="#cfc8c0"/><path d="M18 28q26 8 54 0l-3 6q-24 7-48 0z" fill="#e4dfd8"/><path d="M9 17q-1 6 7 7 4 6 11 3 7 6 15 2 8 5 15 0 9 3 13-3 11 0 10-9z" fill="#e9b264" stroke="#c98a3c" stroke-width=".7"/><path d="M9 18q-2-6 7-8 2-5 11-5 36-3 42 4 13 2 11 9-4 8-36 8T9 18z" fill="#f0c37a"/><path d="M17 17q0-8 27-9 28 0 29 8-2 8-28 8-26 0-28-7z" fill="#d0682a"/><path d="M33 15q-1-5 6-6-2-5 5-6 1-2 0-3 5 1 5 5 6 0 4 4 6 2 1 6-11 6-21 0z" fill="#fbf3e2"/><path d="M34 14q9 4 19-3M39 9q5 2 10-3" stroke="#d8bd94" fill="none"/><path d="M1 25q9 2 10 8l5 4-6-2Q1 34 1 25z" fill="#dd6a24"/><path d="M88 24q-9 0-12 5l-8 5 9-3q9 1 11-7z" fill="#c9571f"/></svg>
			</div>
			<div class="apps">
				<button title="Task View"><svg viewBox="0 0 32 32"><g fill="none" stroke="#eee" stroke-width="1.500"><path d="M6 11h13v11H6zM6 4v4h13V4M6 29v-4h13v4M25 4v6M25 17v12"/></g><path d="M23 12h4v4h-4z" fill="#eee"/></svg></button>
				<button title="Copilot"><svg viewBox="0 0 32 32"><path d="M11 4h8q3 0 2 3l-5 15q-1 3-4 3H5q-4 0-3-5L7 8q1-4 4-4z" fill="url(#gCopA)"/><path d="M20 8h7q4 0 3 5l-4 12q-1 4-4 4h-8q-3 0-2-3l4-14q1-4 4-4z" fill="url(#gCopB)"/></svg></button>
				<button title="Edge"><svg viewBox="0 0 32 32"><circle cx="16" cy="16" r="14.500" fill="url(#gEdge)"/><path d="M2 18q1-9 11-9 8 1 9 7-5-3-9 1-3 6 3 11 5 3 11-1-5 5-13 3Q3 27 2 18z" fill="#1463b0"/><path d="M13 17q4-4 8 0 0 3-2 4 5 3 11 0-2 4-6 5-8 1-11-4-1-2 0-5z" fill="#1f363f"/></svg></button>
				<button class="open" title="File Explorer"><svg viewBox="0 0 32 32"><path d="M3 5h10l3 3h14v8H3z" fill="#e0a31c"/><path d="M3 10h27v17H3z" fill="#ffd766"/><path d="M7 28V19q0-3 3-3h12q3 0 3 3v9h-4v-6H11v6z" fill="#3c9ae0"/></svg></button>
				<button title="World of Warcraft"><svg viewBox="0 0 32 32"><circle cx="16" cy="16" r="13" fill="#23180e" stroke="#a8762e" stroke-width="2"/><path d="M7 9h5l1 10 3-9 3 9 1-10h5l-4 15h-3l-2-7-2 7h-3z" fill="#f2c14a"/></svg></button>
				<button title="Outlook"><svg viewBox="0 0 32 32"><path d="M7 12 18 3l12 9v17H10z" fill="#28a8ea"/><path d="M12 10l9-6 9 8-9 7z" fill="#0f58a8"/><path d="M30 13v16H12z" fill="#50d0f8"/><path d="M2 13h15v15H2z" fill="#0f6cbd"/><circle cx="9.500" cy="20.500" r="4" fill="none" stroke="#fff" stroke-width="2"/></svg></button>
				<button title="Store"><svg viewBox="0 0 32 32"><path d="M10 9V4h12v5" fill="none" stroke="#2fa8e8" stroke-width="2"/><path d="M2 8h28v18q0 3-3 3H5q-3 0-3-3z" fill="#f6f6f6"/><path d="M11 13h5v5h-5z" fill="#f25022"/><path d="M17 13h5v5h-5z" fill="#7fba00"/><path d="M11 19h5v5h-5z" fill="#00a4ef"/><path d="M17 19h5v5h-5z" fill="#ffb900"/></svg></button>
				<button title="WhatsApp"><svg viewBox="0 0 32 32"><path d="M3 29l2-7Q0 12 8 5q9-5 17 1 8 9 0 18-7 5-15 2z" fill="none" stroke="#2bd366" stroke-width="2.500"/><path d="M10 9q3-2 4 3l-1 2q1 3 5 5l2-2q5 1 3 4-3 4-9 0-7-6-4-12z" fill="#2bd366"/></svg><span class="badge">1</span></button>
				<button title="Telegram"><svg viewBox="0 0 32 32"><circle cx="16" cy="16" r="13" fill="#34a4dc"/><path d="M7 16l17-7-3 15-5-4-3 3-1-5z" fill="#fff"/></svg></button>
				<button title="Chrome"><svg viewBox="0 0 32 32"><circle cx="16" cy="16" r="14" fill="#fbc116"/><path d="M16 16 3.900 9A14 14 0 0 1 28.100 9z" fill="#e33b2e"/><path d="M16 16 3.900 9A14 14 0 0 0 16 30l6-11z" fill="#2ba24c"/><path d="M16 9h12L22 20z" fill="#fbc116"/><circle cx="16" cy="16" r="7" fill="#fff"/><circle cx="16" cy="16" r="5.500" fill="#4285f4"/></svg></button>
				<button class="open" title="Matrix launcher"><svg viewBox="0 0 32 32"><circle cx="16" cy="16" r="14" fill="#1576a4" stroke="#0e3c58" stroke-width="2"/><path d="M9 8h7l0 11 5-10q3-2 5 0-4 2-6 7l-6 10h-3q2-12-2-18z" fill="#fff"/></svg></button>
				<button class="open" title="Matrix"><svg viewBox="0 0 32 32"><path fill="#42b864" d="M1 1h30v30H1z"/><path d="M3 22 11 9l0 15L20 8l-2 15q0 3 5 0M4 12l9-5M20 8l9-4" fill="none" stroke="#e9fff0" stroke-width="1.500"/></svg></button>
			</div>
			<div class="weather">
				<svg viewBox="0 0 34 34"><circle cx="18" cy="24" r="9" fill="#e9973c"/><circle cx="13" cy="20" r="7" fill="#20303d"/><path d="M4 15q-3-5 2-7 3-6 8-2 5 0 5 5t-5 4z" fill="#b4c8f6"/><path d="M16 32q-3-5 2-6 3-6 8-1 5 0 5 4t-5 3z" fill="#b4c8f6"/><circle cx="25" cy="9" r="8" fill="#c9301f"/><text x="22" y="14">3</text></svg>
				<span>25°C</span><span>Partly cloudy</span>
			</div>
			<div class="tray">
				<button title="Show hidden icons"><svg viewBox="0 0 24 24"><path d="M5 15l7-7 7 7"/></svg></button>
				<button title="Update"><svg viewBox="0 0 24 24"><path d="M3 6l17-4v18L3 18zM8 10q4-4 7 0v-2M15 13q-3 4-7 1v2"/><circle cx="18" cy="19" r="4.500" fill="#f79a1d" stroke="none"/></svg></button>
				<button title="Battery"><svg viewBox="0 0 24 24"><path d="M7 8h13v9H7zM20 11h2v3M2 4v3M5 4v3M1 7h5v4l-2 1v4h3"/></svg></button>
				<button title="Network"><svg viewBox="0 0 24 24"><path d="M3 20Q4 5 20 4M8 20Q8 10 20 9M12 20q0-6 8-7M16 20q0-3 4-4"/></svg></button>
				<button title="Volume"><svg viewBox="0 0 24 24"><path d="M2 9h4l5-5v16l-5-5H2zM14 9q2 3 0 6M17 7q4 5 0 10"/><path d="M20 5q5 7 0 14" opacity=".5"/></svg></button>
			</div>
			<span class="lang">ENG</span>
			<div class="clock"><span>7:38 PM</span><span>10/15/2025</span></div>
			<button class="notify" title="Notifications"><svg viewBox="0 0 24 24"><path d="M2 2h20v17h-9l-4 4v-4H2z" fill="#fff"/><path d="M6 7h12M6 11h12M6 15h8" stroke="#1c2638" stroke-width="1.500"/></svg><span class="badge">9</span></button>
		</footer>
		<script src="script.js"></script>
	</body>
</html>
```
FILE: styles.css
```css
* {
	box-sizing: border-box;
}

html, body {
	height: 100%;
}

body {
	margin: 0;
	display: flex;
	flex-direction: column;
	overflow: hidden;
	position: relative;
	font-family: "Liberation Sans", Arial, sans-serif;
	font-size: 16px;
	color: #111;
	background: #f6f6fa;
}

button, input, select {
	font: inherit;
	color: inherit;
	margin: 0;
	padding: 0;
	border: 0;
	border-radius: 0;
	background: none;
}

a {
	color: inherit;
	text-decoration: none;
}

h1, h2, p {
	margin: 0;
	font-weight: normal;
}

svg {
	display: block;
}

.defs {
	position: absolute;
}

.push {
	margin-left: auto;
}

/* title + menu */
.titlebar {
	display: flex;
	align-items: center;
	flex: none;
	height: 29px;
	padding-left: 2px;
	background: #fdfdfd;
}

.app-logo {
	width: 20px;
	height: 20px;
}

.titlebar h1 {
	margin-left: 5px;
	font-family: "Open Sans", sans-serif;
	font-size: 15px;
	color: #8a8a8a;
}

.window-buttons {
	display: flex;
	margin-left: auto;
	padding-right: 3px;
}

.window-buttons button {
	display: grid;
	place-items: center;
	width: 58px;
	height: 28px;
}

.window-buttons svg {
	width: 12px;
	height: 12px;
	fill: none;
	stroke: #777;
}

.menubar {
	display: flex;
	align-items: center;
	flex: none;
	gap: 15px;
	height: 27px;
	padding-left: 8px;
	background: #e7e8e8;
	font-size: 13px;
}

.workspace {
	display: flex;
	flex: 1;
	min-height: 0;
}

/* left side */
.sidebar {
	display: flex;
	flex-direction: column;
	flex: none;
	width: 375px;
	background: #323232;
	color: #d6d6cc;
	font-family: "DejaVu Sans", Verdana, sans-serif;
	font-size: 14px;
	overflow: hidden;
}

.panel-head {
	display: flex;
	align-items: center;
	justify-content: space-between;
	height: 18px;
	padding: 0 3px 0 5px;
	background: linear-gradient(#b4b3a9, #a5a59d 40%, #bdbbb2);
	border-left: 1px solid #dedccf;
	border-bottom: 1px solid #cfccc0;
	color: #050505;
}

.panel-head h2 {
	font-size: 14px;
	line-height: 16px;
	font-weight: bold;
}

.panel-close {
	width: 15px;
	height: 15px;
	border: 1px solid #77756c;
	border-top-color: #d6d4ca;
	border-left-color: #d6d4ca;
	background:
		linear-gradient(45deg, transparent 45%, #c8434a 45%, #c8434a 55%, transparent 55%) center / 9px 9px no-repeat,
		linear-gradient(-45deg, transparent 45%, #c8434a 45%, #c8434a 55%, transparent 55%) center / 9px 9px no-repeat,
		#bdbbb2;
}

.tool {
	display: grid;
	place-items: center;
}

.tool svg {
	width: 100%;
	height: 100%;
	overflow: visible;
}

.line {
	fill: none;
	stroke: #e6e6e6;
	stroke-width: 1.4;
}

.line text {
	fill: #e6e6e6;
	stroke: none;
	font-size: 10px;
}

.line .big-t {
	font-family: "Liberation Serif", serif;
	font-size: 36px;
	font-weight: bold;
}

.line .node {
	fill: #20386c;
	stroke: #bcd0fa;
}

.line .blue-line {
	stroke: #5f8cd8;
}

.line .ring {
	stroke-width: 3;
}

.line .thick {
	stroke: #7fa8f2;
	stroke-width: 2.5;
}

.line .frame {
	stroke: #5e90f0;
	stroke-width: 2;
}

.line .dot {
	fill: #fff;
	stroke: none;
}

.on {
	background: #6c94ee;
}

.history {
	display: flex;
	align-items: center;
	gap: 2px;
	height: 35px;
	padding: 0 1px;
	background: #646464;
	border-bottom: 1px solid #888;
}

.history .tool {
	width: 31px;
	height: 30px;
}

.arrow-btn {
	display: grid;
	place-items: center;
	width: 31px;
	height: 30px;
	background: #515151;
	border: 2px outset #777;
}

.arrow-btn svg {
	width: 20px;
	height: 20px;
	fill: #6a98fa;
}

.main-menu {
	display: flex;
	align-items: center;
	gap: 10px;
	height: 20px;
	padding-right: 20px;
	background: #1c1c1a;
	color: #e2e2da;
}

.main-menu .current {
	color: #5a48d0;
}

.categories {
	display: flex;
	flex-direction: column;
	height: 44px;
	padding-top: 1px;
	background: #303030;
}

.category-row {
	display: flex;
	justify-content: space-between;
	align-items: center;
	height: 21px;
	padding: 0 2px;
}

.category {
	display: flex;
	align-items: center;
	gap: 2px;
}

.category i {
	width: 10px;
	height: 10px;
	border-radius: 50%;
	box-shadow: inset -1px -2px 2px #0008, inset 2px 2px 2px #fff8;
}

.tool-grid {
	display: grid;
	grid-template-columns: repeat(11, 1fr);
	padding: 2px 5px 1px 0;
}

.tool-grid .tool {
	height: 33px;
}

.measure-tools {
	background: #646464;
}

.edit-tools {
	background: #303030;
}

.tool-grid .tool svg {
	width: 32px;
	height: 32px;
}

/* display panel */
.display {
	display: flex;
	gap: 4px;
	padding: 5px 4px 3px 2px;
	height: 60px;
}

.display-left {
	flex: 1;
	display: flex;
	flex-direction: column;
	justify-content: space-between;
}

.display-right {
	width: 151px;
	display: flex;
	flex-direction: column;
	justify-content: space-between;
}

.display-icons {
	display: flex;
	justify-content: space-between;
	padding: 0 4px 0 2px;
}

.display-icons .tool {
	width: 28px;
	height: 29px;
}

.boxed {
	background: #4b4b4b;
	border: 1px solid #777;
	padding: 0 1px;
}

.display select {
	appearance: none;
	height: 19px;
	padding-left: 3px;
	border: 1px solid #5a5a5a;
	background:
		linear-gradient(45deg, transparent 50%, #666 50%) right 11px center / 5px 5px no-repeat,
		linear-gradient(-45deg, transparent 50%, #666 50%) right 6px center / 5px 5px no-repeat,
		#232323;
	color: #a8a8a0;
	font-size: 12px;
	width: 100%;
}

.display-toggle {
	display: grid;
	place-items: center;
	width: 21px;
	border: 1px solid #a8c0f4;
	background: #6896fa;
}

.display-toggle::before {
	content: "";
	width: 3px;
	height: 9px;
	background: #0a1440;
}

.raised {
	border: 1px outset #999;
	background: #555;
}

/* snaps */
.snap {
	width: 29px;
	height: 29px;
	border: 1px solid #8a8a8a;
	background: #565656;
}

.snap.on {
	background: #5c7cc2;
}

.snap svg {
	width: 27px;
	height: 27px;
	fill: none;
	stroke: #a0a0a0;
	stroke-width: 1.5;
}

.snap svg text {
	fill: #050505;
	stroke: none;
	font-size: 11px;
}

.snap svg .hi {
	stroke: #e0e0e0;
}

.snap svg .navy {
	stroke: #101a80;
	stroke-width: 2;
}

.snap svg .red {
	stroke: #d02020;
	stroke-width: 2;
}

.snap svg .dark {
	stroke: #080808;
	stroke-width: 2;
}

.snap use {
	stroke: none;
}

.snaps-modes {
	display: flex;
	gap: 4px;
	align-items: center;
	height: 37px;
	padding: 0 6px 0 2px;
	background: #3a3a3a;
}

.snap-all {
	display: grid;
	place-items: center;
	width: 62px;
	height: 29px;
	border: 1px solid #777;
	background: #545454;
}

.snap-all span {
	display: grid;
	place-items: center;
	width: 20px;
	height: 20px;
	border: 1px solid #aaa;
	border-right-color: #222;
	border-bottom-color: #222;
}

.snap-all span::before {
	content: "";
	width: 10px;
	height: 12px;
	border: 1px solid #7784e0;
	border-radius: 50%;
}

.snaps-grid {
	display: flex;
	align-items: center;
	height: 39px;
	padding: 0 5px 0 3px;
	background: #646464;
	gap: 6px;
}

.join, .steps {
	display: flex;
	gap: 1px;
}

.steps {
	flex: 1;
	border: 1px solid #222;
	border-bottom-color: #bbb;
}

.steps button {
	flex: 1;
	height: 18px;
	border-left: 1px solid #999;
	background: #555;
	color: #aaa;
	font-size: 13px;
}

.steps .on {
	background: #5878c8;
	color: #b4c4e8;
}

.grid-btn {
	margin-left: -6px;
	border-color: #ccc;
}

/* info */
.info {
	padding: 1px 4px 0 3px;
	height: 76px;
}

.info-row {
	display: flex;
	align-items: center;
	gap: 4px;
	height: 37px;
}

.info-row .tool {
	width: 28px;
	height: 28px;
}

.info-right {
	display: flex;
	justify-content: space-between;
	align-items: center;
	width: 132px;
	height: 35px;
	margin-left: auto;
	padding: 0 2px 0 4px;
}

.info-right.light {
	background: linear-gradient(90deg, #777, #484848);
}

.pink {
	--up: #d02a86;
	--lt: #b02a76;
	--rt: #c85a94;
}

.multi {
	--up: #f2b512;
	--lt: #e03418;
	--rt: #16c8b4;
}

.soft {
	--up: #f0c830;
	--lt: #d87aa0;
	--rt: #4ad0d8;
}

/* layers */
.layers {
	padding: 7px 7px 12px 4px;
}

.layers-top {
	display: flex;
	height: 23px;
}

.visibility {
	display: flex;
	gap: 12px;
	margin-left: 34px;
}

.visibility button {
	display: flex;
	align-items: center;
	justify-content: space-between;
	gap: 7px;
	height: 18px;
	padding: 0 3px;
	border: 1px solid #aaa;
	border-top-color: #111;
	background: #4c4c4c;
	font-size: 12px;
}

.visibility svg {
	width: 24px;
	height: 12px;
}

.layer-cols {
	display: grid;
	grid-template-columns: 176px 176px;
	gap: 8px 11px;
}

.layer-group {
	display: flex;
	gap: 3px;
}

.layer-bar {
	width: 7px;
	background: linear-gradient(90deg, #8fb0f8, #4a74cc);
}

.layer-rows {
	display: flex;
	flex-direction: column;
	gap: 2px;
}

.layer-row {
	display: flex;
	gap: 1px;
	height: 18px;
}

.layer-name {
	width: 62px;
	line-height: 16px;
	white-space: nowrap;
	border-bottom: 1px solid #141414;
}

.layer-name.selected {
	background: #6896fa;
	border-bottom-color: #6896fa;
	color: #eef2ff;
}

.layer-controls {
	display: grid;
	grid-template-columns: 19px 29px 22px 33px;
	border-top: 1px solid #111;
	border-bottom: 1px solid #bbb;
	border-right: 1px solid #bbb;
}

.layer-controls button {
	display: grid;
	place-items: center;
	background: #4e4e4e;
	border-left: 1px solid #999;
}

.layer-controls .expand::before {
	content: "";
	border: 5px solid transparent;
	border-left-color: #e8e8e8;
	border-right: 0;
}

.layer-controls .lock {
	border-left-color: #222;
}

.layer-controls .swatch {
	box-shadow: inset 1px 1px #fff5, inset -1px -1px #0005;
}

.layer-controls .lock svg {
	width: 12px;
	height: 13px;
}

.layer-controls .toggle::before {
	content: "";
	width: 9px;
	height: 9px;
	border: 1px solid #6f84e0;
	border-radius: 50%;
}

.layer-controls .toggle.shown {
	background: #6896fa;
}

.layer-controls .toggle.shown::before {
	width: 3px;
	height: 8px;
	border: 0;
	border-radius: 0;
	background: #0a1440;
}

.layers-split {
	display: grid;
	place-items: center;
	height: 31px;
	margin: 0 38px 0 42px;
	background: linear-gradient(#0a0a0a, #0a0a0a) center / 100% 1px no-repeat;
}

.layers-split svg {
	width: 16px;
	height: 16px;
}

.projects {
	flex: 1;
}

/* right side */
.main {
	position: relative;
	display: flex;
	flex-direction: column;
	flex: 1;
	min-width: 0;
	padding: 12px 11px 5px 10px;
	background: linear-gradient(#f7f8fb, #e9edf0 10px, #f6f6fa 14px);
	border-bottom: 2px solid #918c8c;
}

.command {
	display: flex;
	flex: none;
	height: 73px;
	background: #dadddf;
}

.grip {
	width: 3px;
	margin: 1px 2px;
	border-left: 1px solid #888;
	border-right: 1px solid #888;
}

.command-text {
	flex: 1;
	background: #83b48c;
}

.command-history {
	height: 48px;
	padding: 1px 0 0 2px;
	border-bottom: 1px solid #32483a;
	line-height: 20px;
}

.command-line {
	display: flex;
	align-items: center;
	height: 23px;
	padding-left: 2px;
	font-weight: bold;
}

.command-line input {
	flex: 1;
	outline: 0;
}

.command-scroll {
	display: flex;
	flex-direction: column;
	width: 20px;
}

.scroll-box {
	display: flex;
	flex-direction: column;
	justify-content: space-between;
	height: 48px;
	padding: 4px 0;
	background: #f0f0f0;
	border-bottom: 1px solid #555;
}

.scroll-box button, .spin-box button {
	display: grid;
	place-items: center;
	width: 100%;
	height: 14px;
}

.scroll-box svg {
	width: 10px;
	height: 8px;
	fill: none;
	stroke: #555;
	stroke-width: 2;
}

.spin-box button {
	height: 12px;
	border: 1px solid #aaa;
	background: #f0f0f0;
}

.spin-box svg {
	width: 8px;
	height: 4px;
}

.tabs {
	display: flex;
	align-items: flex-end;
	flex: none;
	height: 34px;
	padding-left: 1px;
	background: #dadddf;
	border-bottom: 1px solid #666;
	font-size: 15px;
}

.tab {
	position: relative;
	height: 25px;
	margin-left: 6px;
	padding: 0 6px 2px 7px;
	border-top: 1px solid #555;
	border-right: 1px solid #555;
	border-top-right-radius: 5px;
	background: #dce8ec;
	isolation: isolate;
}

.tab::before {
	content: "";
	position: absolute;
	z-index: -1;
	top: -1px;
	left: -5px;
	width: 12px;
	height: 25px;
	border-left: 1px solid #555;
	border-top: 1px solid #555;
	background: inherit;
	transform: skewX(-22deg);
}

.tab.active, .tab.active::before {
	background: #83b48c;
}

.tab.add {
	padding: 0 10px;
	background: #e2e4e6;
}

.tab svg {
	width: 12px;
	height: 12px;
	fill: none;
	stroke: #666;
}

.viewport {
	position: relative;
	flex: 1;
	min-height: 0;
	background: #000;
	border-left: 1px solid #555;
	border-bottom: 1px solid #555;
}

.scene {
	width: 100%;
	height: 100%;
}

.view-label {
	position: absolute;
	top: 0;
	left: 0;
	display: flex;
	align-items: center;
	height: 23px;
	padding-left: 10px;
	background: #83b48c;
	font-size: 15px;
}

.view-label button {
	display: grid;
	place-items: center;
	width: 14px;
	height: 18px;
	margin-left: 9px;
	border-left: 1px solid #223;
}

.view-label button::before {
	content: "";
	border: 5px solid transparent;
	border-top: 6px solid #111;
	border-bottom: 0;
}

.stones {
	--table: #4df4ff;
	--side: #1187a2;
	--shade: #021c1e;
	--shade-soft: #053338;
	--lip: #14a2bf;
	--edge: #1cc4e4;
}

.stones.blue {
	--table: #3633ff;
	--side: #0000b4;
	--shade: #00001c;
	--shade-soft: #00003c;
	--lip: #0000cc;
	--edge: #0000ff;
}

.table {
	fill: var(--table);
}

.side {
	fill: var(--side);
}

.shade {
	fill: var(--shade);
}

.shade.soft {
	fill: var(--shade-soft);
}

.lip {
	fill: var(--lip);
}

.edge {
	fill: none;
	stroke: var(--edge);
	stroke-width: 2;
}

.dimension {
	fill: #fff;
}

.dimension text {
	font-size: 184px;
}

.dimension .one {
	font-family: Roboto, "Liberation Sans", sans-serif;
}

.dim-line {
	fill: none;
	stroke: #e8e8e8;
	stroke-width: 1.5;
}

.axis {
	font-family: "DejaVu Sans Mono", monospace;
	font-size: 14px;
}

.axis.y {
	fill: #12909c;
}

.axis.x {
	fill: #d81818;
}

/* bottom bars */
.osnaps {
	display: flex;
	align-items: center;
	flex: none;
	gap: 10px;
	height: 38px;
	padding: 7px 0 0 2px;
	background: #dadddf;
	color: #858585;
	font-size: 13px;
}

.osnaps .grip {
	height: 24px;
	margin: 0 -3px 0 0;
}

.osnaps label {
	display: flex;
	align-items: center;
	gap: 7px;
}

.osnaps input {
	appearance: none;
	display: grid;
	place-items: center;
	width: 15px;
	height: 15px;
	border: 1px solid #ccc;
	background: #fff;
}

.osnaps input:checked::before {
	content: "";
	width: 10px;
	height: 5px;
	margin-bottom: 3px;
	border-left: 2px solid #b8b8b8;
	border-bottom: 2px solid #b8b8b8;
	transform: rotate(-45deg);
}

.osnaps .flat input {
	background: #c8c8c8;
	border-color: #bbb;
}

.osnaps .master {
	gap: 4px;
	color: #111;
}

.osnaps .master input {
	width: 18px;
	height: 18px;
	border: 2px solid #2a6faa;
	background: #8e8e8e;
	box-shadow: inset 0 0 0 1px #dce8f4;
}

.status {
	display: flex;
	flex: none;
	height: 26px;
	border-top: 1px solid #555;
	background: #dadddf;
	white-space: nowrap;
}

.status button {
	padding: 0 10px;
	border-right: 1px solid #444;
}

.status button:first-child {
	padding: 0 8px 0 7px;
}

.status .coord {
	width: 110px;
}

.status .layer {
	display: flex;
	align-items: center;
	flex: 1;
	gap: 2px;
	padding-left: 4px;
}

.status .layer i {
	width: 17px;
	height: 18px;
	border: 1px solid #111;
	background: #05825a;
}

.status .on {
	background: #e6f0f6;
	font-weight: bold;
}

.status .tol {
	margin-right: 7px;
	padding: 0 9px 0 5px;
}

.watermark {
	position: absolute;
	right: 85px;
	bottom: 45px;
	color: #9ba7a9cc;
	font-family: "Open Sans", sans-serif;
	font-size: 17px;
	line-height: 25px;
	pointer-events: none;
}

.watermark .wm-title {
	font-size: 24px;
	line-height: 34px;
}

/* recorder */
.recorder {
	position: absolute;
	top: 14px;
	left: 43%;
	display: flex;
	align-items: center;
	justify-content: space-between;
	width: 581px;
	height: 55px;
	padding: 0 11px 0 13px;
	background: #191d2b;
	border: 1px solid #4d5560;
}

.recorder button {
	display: grid;
	place-items: center;
	width: 28px;
	height: 28px;
}

.recorder svg {
	width: 28px;
	height: 28px;
}

.recorder .round {
	border-radius: 50%;
	background: #2a2d3d;
	box-shadow: 0 0 0 4px #2a2d3d;
}

.timer {
	margin: 0 12px;
	color: #3a3e4a;
	font-family: "Liberation Mono", monospace;
	font-size: 25px;
}

.recorder .recorder-corner {
	position: absolute;
	top: 0;
	right: -1px;
	display: flex;
	gap: 3px;
}

.recorder-corner button, .recorder-corner svg {
	width: 16px;
	height: 16px;
}

/* taskbar */
.taskbar {
	display: flex;
	flex: none;
	align-items: center;
	height: 50px;
	background: linear-gradient(90deg, #20353d, #20353f 50%, #1a2238);
	color: #f4f4f4;
	font-family: "Open Sans", sans-serif;
}

.start {
	display: grid;
	place-items: center;
	width: 60px;
	height: 50px;
}

.start svg {
	width: 20px;
	height: 20px;
}

.search {
	display: flex;
	align-items: center;
	width: 360px;
	height: 50px;
	padding: 0 4px 0 15px;
	background: #f2f1f2;
}

.glass {
	width: 22px;
	height: 22px;
	fill: none;
	stroke: #222;
	stroke-width: 1.5;
}

.search input {
	flex: 1;
	min-width: 0;
	padding-left: 13px;
	font-size: 18px;
}

.search input::placeholder {
	color: #333;
}

.pie {
	width: 90px;
	height: 40px;
}

.apps {
	display: flex;
	height: 50px;
}

.apps button {
	position: relative;
	display: grid;
	place-items: center;
	width: 62px;
	height: 50px;
}

.apps svg {
	width: 32px;
	height: 30px;
}

.apps .open::after {
	content: "";
	position: absolute;
	bottom: 0;
	left: 5px;
	right: 5px;
	height: 3px;
	background: #7cb4e8;
}

.badge {
	position: absolute;
	right: 5px;
	bottom: 5px;
	width: 20px;
	height: 20px;
	border: 1px solid #aaa;
	border-radius: 50%;
	background: #25343e;
	font-size: 14px;
	line-height: 18px;
	text-align: center;
}

.weather {
	display: flex;
	align-items: center;
	gap: 10px;
	margin-left: auto;
	font-size: 17px;
	white-space: nowrap;
}

.weather svg {
	width: 34px;
	height: 34px;
	margin-right: -4px;
}

.weather text {
	fill: #fff;
	font-size: 13px;
}

.tray {
	display: flex;
	gap: 6px;
	margin-left: 27px;
}

.tray button, .tray svg {
	width: 24px;
	height: 24px;
}

.tray svg {
	fill: none;
	stroke: #f0f0f0;
	stroke-width: 1.4;
}

.lang {
	margin-left: 12px;
	font-size: 15px;
}

.clock {
	display: flex;
	flex-direction: column;
	align-items: center;
	margin-left: 12px;
	font-size: 14px;
	line-height: 23px;
}

.notify {
	position: relative;
	width: 58px;
	height: 50px;
	margin: 0 5px 0 7px;
	border-right: 1px solid #58606e;
}

.notify svg {
	width: 24px;
	height: 24px;
	margin: 0 0 4px 11px;
}

.notify .badge {
	right: 15px;
	font-weight: bold;
}
```
FILE: script.js
```js
var categories = [
	[["Curve", "#d4b32c"], ["Surface", "#2a9a6a"], ["Solid", "#8a1ce0"], ["Transform", "#ee3a1c"], ["SubD", "#ee3a1c"], ["Art", "#d8dc2c"]],
	[["Builder", "#d8202c"], ["Tools", "#5a50e8"], ["Gems", "#3a86d8"], ["Setting", "#d81cc0"], ["Cutters", "#f07818"], ["Render", "#18b8a0"]]
];

// name, colour, visible
var layersTop = [
	[["Metal 01", "#05825a", true], ["Metal 02", "#3cb85c", true], ["Metal 03", "#82fa78", true], ["Metal 04", "#b8fcb4", false]],
	[["User 01", "#fa0000", false], ["User 02", "#00fa00", true], ["User 03", "#0000fa", true], ["User 04", "#868686", false]],
	[["Gem 01", "#003a9c", true], ["Gem 02", "#3c74cc", true], ["Gem 03", "#74acf4", false], ["Gem 04", "#acccfc", false]],
	[["Heads", "#7a1aa4", false], ["Finger", "#b43a3c", true], ["Cutting", "#fa7a04", true], ["Creation", "#fab814", true]]
];
var layersBottom = [
	[["User 18", "#f4ac64", true], ["User 25", "#a4fcec", true], ["User 27", "#00bcb4", true], ["User 28", "#048284", true]],
	[["User 29", "#ecd4ac", true], ["User 32", "#6c4a10", false], ["User 23", "#00f49c", false], ["User 24", "#448c24", false]],
	[["User 26", "#1c0c64", false], ["User 30", "#14ccf4", true], ["User 31", "#d4ac3c", true], ["User 28", "#cc04dc", true]],
	[["User 29", "#ac54cc", true], ["User 30", "#bcb45c", true], ["User 31", "#300a84", true], ["User 32", "#384c24", false]]
];

// name, checked, class
var osnaps = [
	["End", true], ["Near", true], ["Point", false], ["Mid", true], ["Cen", true], ["Int", false],
	["Perp", false], ["Tan", false], ["Quad", true], ["Knot", false], ["Vertex", false],
	["Project", false, "flat"], ["Disable", false, "master"]
];

function layerRow(layer) {
	return `
		<div class="layer-row">
			<span class="layer-name ${layer[0] === "Metal 01" ? "selected" : ""}">${layer[0]}</span>
			<div class="layer-controls">
				<button class="expand" title="Select"></button>
				<button class="swatch" title="Colour" style="background-color: ${layer[1]}"></button>
				<button class="lock" title="Lock"><svg><use href="#lock"/></svg></button>
				<button class="toggle ${layer[2] ? "shown" : ""}" title="Visible"></button>
			</div>
		</div>`;
}

function drawLayers(id, groups) {
	var str = "";
	for (var i = 0; i < groups.length; i++) {
		str += `
			<div class="layer-group">
				<div class="layer-rows">${groups[i].map(layerRow).join("")}</div>
				<div class="layer-bar"></div>
			</div>`;
	}
	document.querySelector(id).innerHTML = str;
}

function drawCategories() {
	var str = "";
	for (var i = 0; i < categories.length; i++) {
		str += `<div class="category-row">`;
		for (var j = 0; j < categories[i].length; j++) {
			var cat = categories[i][j];
			str += `<a class="category" href="#"><i style="background-color: ${cat[1]}"></i>${cat[0]}</a>`;
		}
		str += `</div>`;
	}
	document.querySelector("#categories").innerHTML = str;
}

function drawOsnaps() {
	var str = `<div class="grip"></div>`;
	for (var i = 0; i < osnaps.length; i++) {
		var snap = osnaps[i];
		str += `<label class="${snap[2] || ""}"><input type="checkbox" ${snap[1] ? "checked" : ""}>${snap[0]}</label>`;
	}
	document.querySelector("#osnaps").innerHTML = str;
}

drawCategories();
document.querySelector("#lights").innerHTML = layerRow(["Lights", "#fafafa", true]);
drawLayers("#layersTop", layersTop);
drawLayers("#layersBottom", layersBottom);
drawOsnaps();
```
